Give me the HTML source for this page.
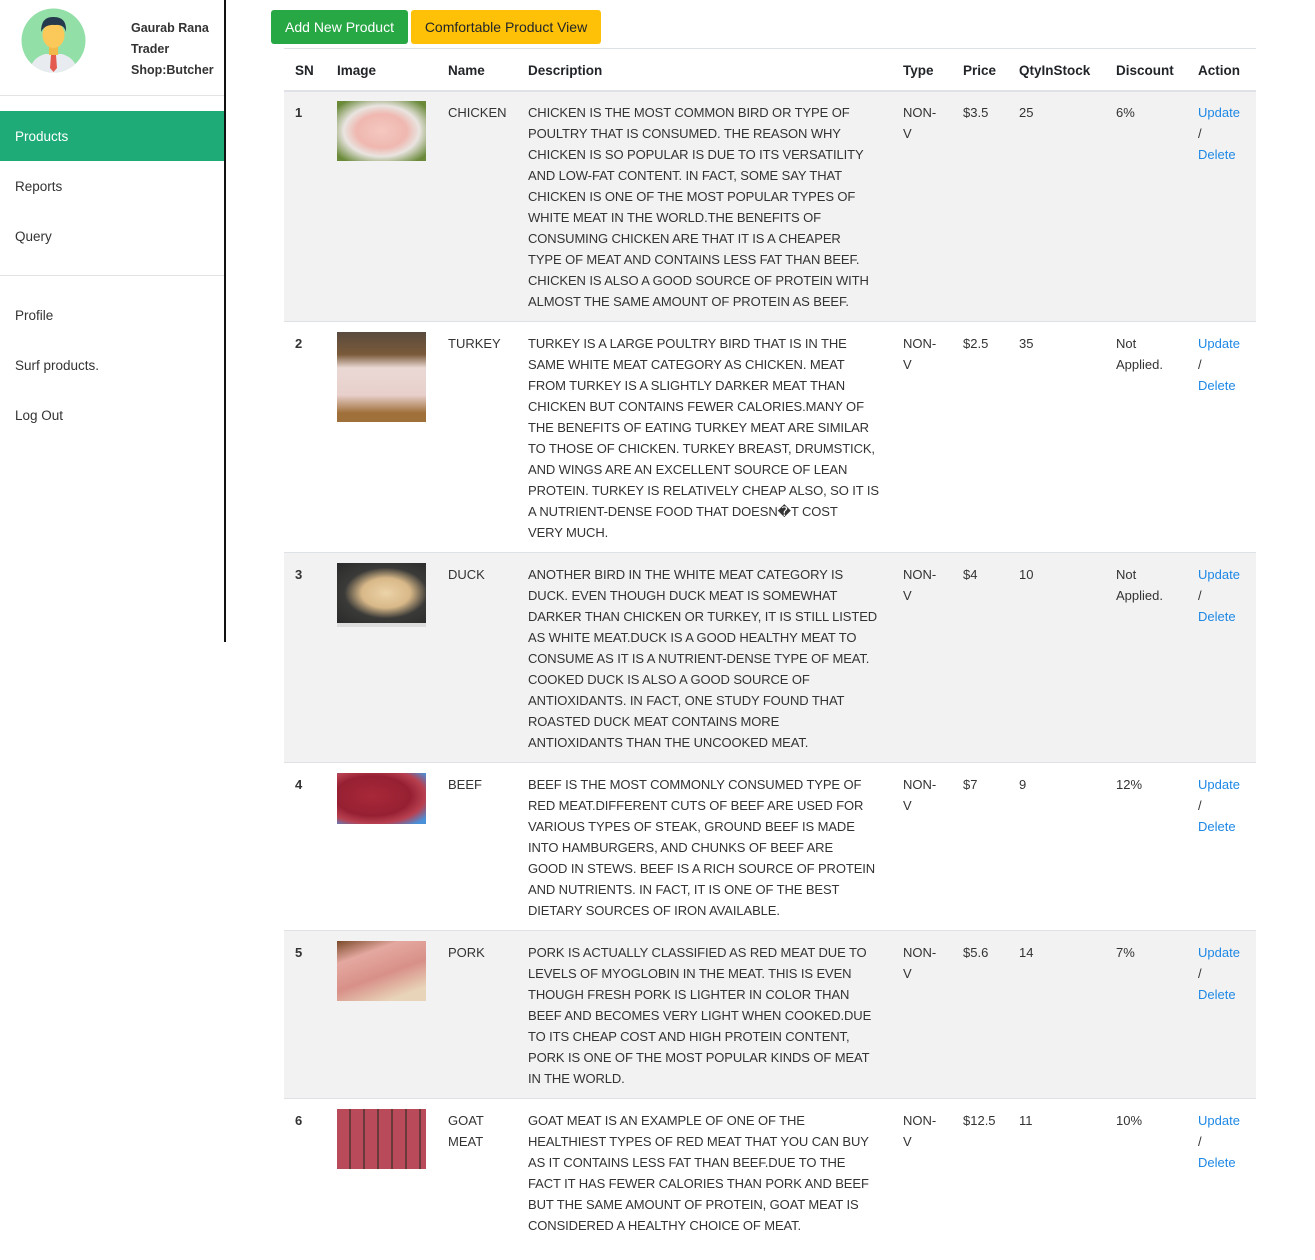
<!DOCTYPE html>
<html><head><meta charset="utf-8"><style>
*{margin:0;padding:0;box-sizing:border-box}
body{width:1315px;height:1260px;position:relative;background:#fff;font-family:"Liberation Sans",sans-serif;color:#212529;overflow:hidden}
.a{position:absolute;white-space:nowrap}
.t{font-size:13px;line-height:21px;color:#333}
.h{font-size:13.5px;font-weight:bold;top:63px;color:#212529}
.row{position:absolute;left:284px;width:972px;border-top:1px solid #dee2e6}
.g{background:#f2f2f2}
.lnk{color:#1e88e5}
.side{font-size:13.5px;color:#333;left:15px}
.d{font-size:13px;letter-spacing:-0.1px}
</style></head><body>
<div class="a" style="left:224px;top:0;width:2px;height:642px;background:#111"></div>
<svg class="a" style="left:21px;top:8px" width="65" height="65" viewBox="0 0 65 65">
<circle cx="32.5" cy="32.5" r="32" fill="#93dfa8"/>
<clipPath id="c"><circle cx="32.5" cy="32.5" r="32"/></clipPath>
<g clip-path="url(#c)">
<path d="M8 65 Q10 50 24 46 L41 46 Q55 50 57 65Z" fill="#e8ecf0"/>
<path d="M30 47 L35 47 L36 60 L32.5 64 L29 60Z" fill="#e55a4f"/>
<rect x="28" y="38" width="9" height="9" fill="#f0b94a"/>
<ellipse cx="32.5" cy="27" rx="11" ry="13" fill="#fbc95a"/>
<path d="M20 24 Q20 8 33 9 Q46 9 45 24 Q43 16 34 17 Q24 16 20 24Z" fill="#263a4d"/>
</g></svg>
<div class="a" style="left:131px;top:18px;font-size:12.5px;line-height:21px;font-weight:bold;color:#333">Gaurab Rana<br>Trader<br>Shop:Butcher</div>
<div class="a" style="left:0;top:95px;width:224px;height:1px;background:#e3e3e3"></div>
<div class="a" style="left:0;top:111px;width:224px;height:50px;background:#1fab77"></div>
<div class="a side" style="top:129px;color:#fff">Products</div>
<div class="a side" style="top:179px">Reports</div>
<div class="a side" style="top:229px">Query</div>
<div class="a" style="left:0;top:275px;width:224px;height:1px;background:#e3e3e3"></div>
<div class="a side" style="top:308px">Profile</div>
<div class="a side" style="top:358px">Surf products.</div>
<div class="a side" style="top:408px">Log Out</div>
<div class="a" style="left:271px;top:10px;width:137px;height:34px;background:#28a745;border-radius:3px;color:#fff;font-size:14px;line-height:34px;text-align:center">Add New Product</div>
<div class="a" style="left:411px;top:10px;width:190px;height:34px;background:#ffc107;border-radius:3px;color:#212529;font-size:14px;line-height:34px;text-align:center">Comfortable Product View</div>
<div class="a" style="left:284px;top:48px;width:972px;height:1px;background:#dee2e6"></div>
<div class="a h" style="left:295px">SN</div>
<div class="a h" style="left:337px">Image</div>
<div class="a h" style="left:448px">Name</div>
<div class="a h" style="left:528px">Description</div>
<div class="a h" style="left:903px">Type</div>
<div class="a h" style="left:963px">Price</div>
<div class="a h" style="left:1019px">QtyInStock</div>
<div class="a h" style="left:1116px">Discount</div>
<div class="a h" style="left:1198px">Action</div>
<div class="row g" style="top:90px;height:231px;border-top:2px solid #dee2e6"></div>
<div class="row" style="top:321px;height:231px"></div>
<div class="row g" style="top:552px;height:210px"></div>
<div class="row" style="top:762px;height:168px"></div>
<div class="row g" style="top:930px;height:168px"></div>
<div class="row" style="top:1098px;height:162px"></div>

<div class="a t" style="left:295px;top:102px;font-weight:bold">1</div>
<div class="a" style="left:337px;top:101px;width:89px;height:60px;background:radial-gradient(ellipse at center,#f4c8c0 0%,#efb8b0 40%,#e9e4e0 60%,#6a8a3a 90%)"></div>
<div class="a t" style="left:448px;top:102px">CHICKEN</div>
<div class="a t d" style="left:528px;top:102px">CHICKEN IS THE MOST COMMON BIRD OR TYPE OF<br>POULTRY THAT IS CONSUMED. THE REASON WHY<br>CHICKEN IS SO POPULAR IS DUE TO ITS VERSATILITY<br>AND LOW-FAT CONTENT. IN FACT, SOME SAY THAT<br>CHICKEN IS ONE OF THE MOST POPULAR TYPES OF<br>WHITE MEAT IN THE WORLD.THE BENEFITS OF<br>CONSUMING CHICKEN ARE THAT IT IS A CHEAPER<br>TYPE OF MEAT AND CONTAINS LESS FAT THAN BEEF.<br>CHICKEN IS ALSO A GOOD SOURCE OF PROTEIN WITH<br>ALMOST THE SAME AMOUNT OF PROTEIN AS BEEF.</div>
<div class="a t" style="left:903px;top:102px">NON-<br>V</div>
<div class="a t" style="left:963px;top:102px">$3.5</div>
<div class="a t" style="left:1019px;top:102px">25</div>
<div class="a t" style="left:1116px;top:102px">6%</div>
<div class="a t" style="left:1198px;top:102px"><span class="lnk">Update</span><br>/<br><span class="lnk">Delete</span></div>

<div class="a t" style="left:295px;top:333px;font-weight:bold">2</div>
<div class="a" style="left:337px;top:332px;width:89px;height:90px;background:linear-gradient(180deg,#5a4a3e 0%,#7a5a3a 25%,#ead8d4 40%,#e8d0cc 70%,#a0703a 90%)"></div>
<div class="a t" style="left:448px;top:333px">TURKEY</div>
<div class="a t d" style="left:528px;top:333px">TURKEY IS A LARGE POULTRY BIRD THAT IS IN THE<br>SAME WHITE MEAT CATEGORY AS CHICKEN. MEAT<br>FROM TURKEY IS A SLIGHTLY DARKER MEAT THAN<br>CHICKEN BUT CONTAINS FEWER CALORIES.MANY OF<br>THE BENEFITS OF EATING TURKEY MEAT ARE SIMILAR<br>TO THOSE OF CHICKEN. TURKEY BREAST, DRUMSTICK,<br>AND WINGS ARE AN EXCELLENT SOURCE OF LEAN<br>PROTEIN. TURKEY IS RELATIVELY CHEAP ALSO, SO IT IS<br>A NUTRIENT-DENSE FOOD THAT DOESN�T COST<br>VERY MUCH.</div>
<div class="a t" style="left:903px;top:333px">NON-<br>V</div>
<div class="a t" style="left:963px;top:333px">$2.5</div>
<div class="a t" style="left:1019px;top:333px">35</div>
<div class="a t" style="left:1116px;top:333px">Not<br>Applied.</div>
<div class="a t" style="left:1198px;top:333px"><span class="lnk">Update</span><br>/<br><span class="lnk">Delete</span></div>

<div class="a t" style="left:295px;top:564px;font-weight:bold">3</div>
<div class="a" style="left:337px;top:563px;width:89px;height:60px;background:radial-gradient(ellipse at 55% 50%,#ecd3a8 0%,#d8b888 35%,#3a3a38 60%,#2a2a2a 100%)"></div>
<div class="a" style="left:337px;top:623px;width:89px;height:4px;background:#ddd"></div>
<div class="a t" style="left:448px;top:564px">DUCK</div>
<div class="a t d" style="left:528px;top:564px">ANOTHER BIRD IN THE WHITE MEAT CATEGORY IS<br>DUCK. EVEN THOUGH DUCK MEAT IS SOMEWHAT<br>DARKER THAN CHICKEN OR TURKEY, IT IS STILL LISTED<br>AS WHITE MEAT.DUCK IS A GOOD HEALTHY MEAT TO<br>CONSUME AS IT IS A NUTRIENT-DENSE TYPE OF MEAT.<br>COOKED DUCK IS ALSO A GOOD SOURCE OF<br>ANTIOXIDANTS. IN FACT, ONE STUDY FOUND THAT<br>ROASTED DUCK MEAT CONTAINS MORE<br>ANTIOXIDANTS THAN THE UNCOOKED MEAT.</div>
<div class="a t" style="left:903px;top:564px">NON-<br>V</div>
<div class="a t" style="left:963px;top:564px">$4</div>
<div class="a t" style="left:1019px;top:564px">10</div>
<div class="a t" style="left:1116px;top:564px">Not<br>Applied.</div>
<div class="a t" style="left:1198px;top:564px"><span class="lnk">Update</span><br>/<br><span class="lnk">Delete</span></div>

<div class="a t" style="left:295px;top:774px;font-weight:bold">4</div>
<div class="a" style="left:337px;top:773px;width:89px;height:51px;background:radial-gradient(ellipse at 40% 45%,#a82838 0%,#962032 50%,#b84050 70%,#4a90d8 90%)"></div>
<div class="a t" style="left:448px;top:774px">BEEF</div>
<div class="a t d" style="left:528px;top:774px">BEEF IS THE MOST COMMONLY CONSUMED TYPE OF<br>RED MEAT.DIFFERENT CUTS OF BEEF ARE USED FOR<br>VARIOUS TYPES OF STEAK, GROUND BEEF IS MADE<br>INTO HAMBURGERS, AND CHUNKS OF BEEF ARE<br>GOOD IN STEWS. BEEF IS A RICH SOURCE OF PROTEIN<br>AND NUTRIENTS. IN FACT, IT IS ONE OF THE BEST<br>DIETARY SOURCES OF IRON AVAILABLE.</div>
<div class="a t" style="left:903px;top:774px">NON-<br>V</div>
<div class="a t" style="left:963px;top:774px">$7</div>
<div class="a t" style="left:1019px;top:774px">9</div>
<div class="a t" style="left:1116px;top:774px">12%</div>
<div class="a t" style="left:1198px;top:774px"><span class="lnk">Update</span><br>/<br><span class="lnk">Delete</span></div>

<div class="a t" style="left:295px;top:942px;font-weight:bold">5</div>
<div class="a" style="left:337px;top:941px;width:89px;height:60px;background:linear-gradient(160deg,#7a4a2a 0%,#e4a8a0 25%,#d89088 55%,#e8d4b8 85%)"></div>
<div class="a t" style="left:448px;top:942px">PORK</div>
<div class="a t d" style="left:528px;top:942px">PORK IS ACTUALLY CLASSIFIED AS RED MEAT DUE TO<br>LEVELS OF MYOGLOBIN IN THE MEAT. THIS IS EVEN<br>THOUGH FRESH PORK IS LIGHTER IN COLOR THAN<br>BEEF AND BECOMES VERY LIGHT WHEN COOKED.DUE<br>TO ITS CHEAP COST AND HIGH PROTEIN CONTENT,<br>PORK IS ONE OF THE MOST POPULAR KINDS OF MEAT<br>IN THE WORLD.</div>
<div class="a t" style="left:903px;top:942px">NON-<br>V</div>
<div class="a t" style="left:963px;top:942px">$5.6</div>
<div class="a t" style="left:1019px;top:942px">14</div>
<div class="a t" style="left:1116px;top:942px">7%</div>
<div class="a t" style="left:1198px;top:942px"><span class="lnk">Update</span><br>/<br><span class="lnk">Delete</span></div>

<div class="a t" style="left:295px;top:1110px;font-weight:bold">6</div>
<div class="a" style="left:337px;top:1109px;width:89px;height:60px;background:repeating-linear-gradient(90deg,#b84a5a 0 12px,#6a3a3a 12px 14px),#b84a5a"></div>
<div class="a t" style="left:448px;top:1110px">GOAT<br>MEAT</div>
<div class="a t d" style="left:528px;top:1110px">GOAT MEAT IS AN EXAMPLE OF ONE OF THE<br>HEALTHIEST TYPES OF RED MEAT THAT YOU CAN BUY<br>AS IT CONTAINS LESS FAT THAN BEEF.DUE TO THE<br>FACT IT HAS FEWER CALORIES THAN PORK AND BEEF<br>BUT THE SAME AMOUNT OF PROTEIN, GOAT MEAT IS<br>CONSIDERED A HEALTHY CHOICE OF MEAT.</div>
<div class="a t" style="left:903px;top:1110px">NON-<br>V</div>
<div class="a t" style="left:963px;top:1110px">$12.5</div>
<div class="a t" style="left:1019px;top:1110px">11</div>
<div class="a t" style="left:1116px;top:1110px">10%</div>
<div class="a t" style="left:1198px;top:1110px"><span class="lnk">Update</span><br>/<br><span class="lnk">Delete</span></div>
</body></html>
